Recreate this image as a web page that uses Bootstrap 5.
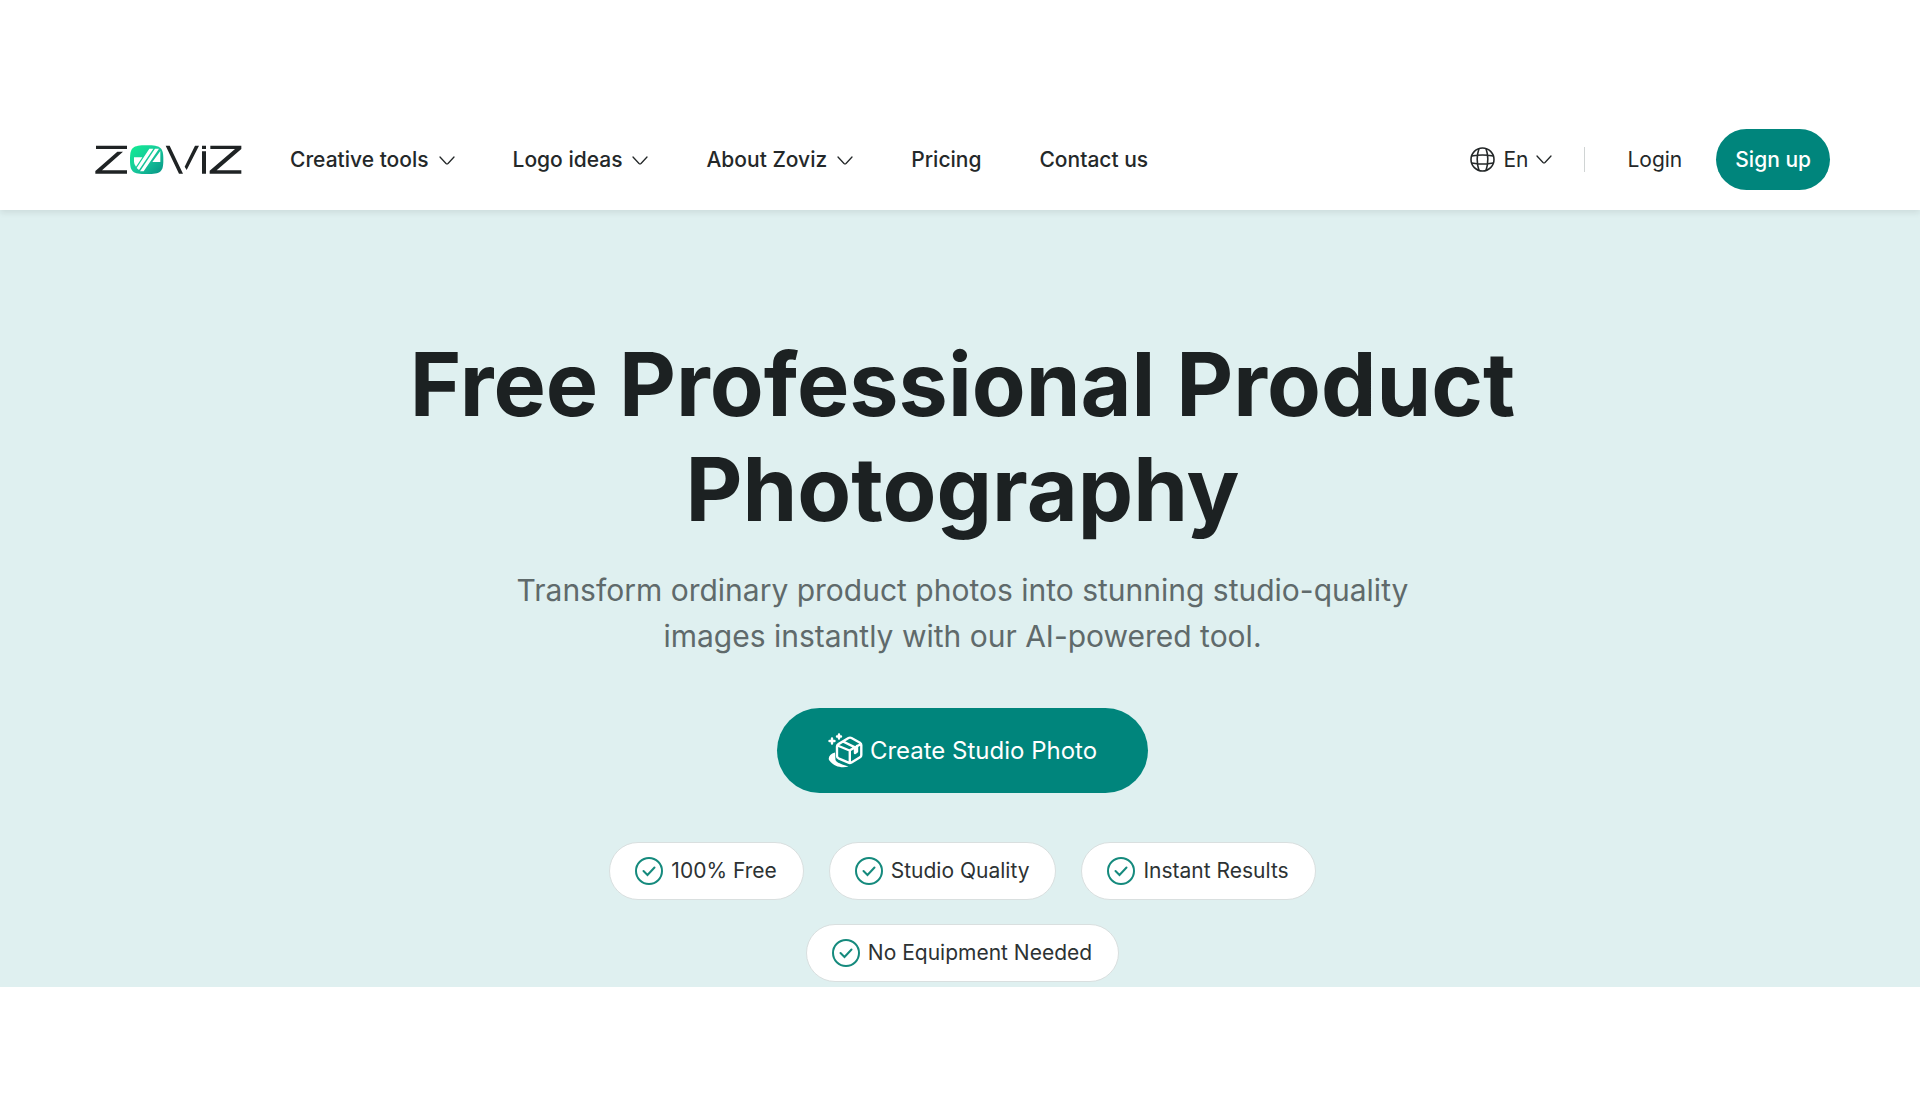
<!DOCTYPE html>
<html lang="en">
<head>
<meta charset="utf-8">
<meta name="viewport" content="width=device-width, initial-scale=1">
<title>Free Professional Product Photography</title>
<link rel="stylesheet" href="https://cdn.jsdelivr.net/npm/bootstrap@5.3.0/dist/css/bootstrap.min.css">
<style>
body{font-family:Inter,"Liberation Sans",sans-serif;color:#1c2122;background:#fff;padding-top:109px}
.site-header{padding:20px 90px 20px 95px;box-shadow:0 3px 6px rgba(0,0,0,.08);clip-path:inset(0 0 -12px 0);z-index:2;font-size:21px;line-height:31px}
.main-menu{gap:58px;margin-left:48px;font-weight:500}
.main-menu svg{margin-top:2px}
.main-menu a,.account a,.lang{color:#242829;text-decoration:none}
.with-arrow{display:inline-flex;align-items:center;gap:10px}
.lang{background:none;border:0;padding:0;gap:8px}
.rule{width:1px;height:25px;background:#d0d4d4;margin:0 42px 0 32px}
.account .signup{background:#00857c;color:#fff;border-radius:31px;padding:15px 19px;margin-left:34px;font-weight:500}
.hero{background:#dff0f0;padding:122px 24px 5px 29px}
.hero h1{font-size:88px;line-height:105px;font-weight:700;max-width:1180px;margin:0 auto 25px}
.hero p{font-size:30px;line-height:46px;color:#5f6a6b;max-width:940px;margin:0 auto 49px}
.cta{background:#00857c;color:#fff;border:0;border-radius:43px;height:85px;padding:0 51px;gap:7px;font-size:24px}
.perks{max-width:940px;margin:49px auto 0;padding:0;gap:24px 25px;list-style:none}
.perks li{display:flex;align-items:center;gap:8px;background:#fff;border:1px solid #d9dfdf;border-radius:29px;padding:0 26px 0 25px;height:58px;font-size:21px;color:#2d3233}
</style>
</head>
<body>
<header class="site-header d-flex align-items-center position-relative bg-white">
  <a href="#" aria-label="Zoviz"><svg class="d-block" width="147" height="30" viewBox="45 74 441 90">
    <defs><linearGradient id="lg" x1="0" y1="0" x2="1" y2="1"><stop offset="0" stop-color="#12ee92"/><stop offset=".5" stop-color="#17c99b"/><stop offset="1" stop-color="#079285"/></linearGradient></defs>
    <g fill="#1f2324"><path d="M48 76H141V86H48zM112 94H129L66 150H141V160H46V152z"/>
    <path d="M257 76H269L309 160H297zM345 76H357L320 149L314 139zM366 76H378V86H366zM366 93H378V160H366z"/>
    <path d="M391 76H484V86L410 150H484V160H389V151L465 86H391z"/></g>
    <path fill="url(#lg)" d="M150 118C150 82 157 75 200 75S250 82 250 118S243 161 200 161S150 154 150 118z"/>
    <path fill="#fff" d="M162 111H187L168 139Q162 132 162 124zM208 85H220L177 149L170 143zM225 85H237L191 153H180zM241 92V125H217z"/>
  </svg></a>
  <nav class="main-menu d-flex">
    <a href="#" class="with-arrow">Creative tools <svg width="16" height="10" viewBox="0 0 16 10" fill="none" stroke="#242829" stroke-width="1.3" stroke-linejoin="round" stroke-linecap="round"><path d="M1 1L7 7.500Q8 8.300 9 7.500L15 1"/></svg></a>
    <a href="#" class="with-arrow">Logo ideas <svg width="16" height="10" viewBox="0 0 16 10" fill="none" stroke="#242829" stroke-width="1.3" stroke-linejoin="round" stroke-linecap="round"><path d="M1 1L7 7.500Q8 8.300 9 7.500L15 1"/></svg></a>
    <a href="#" class="with-arrow">About Zoviz <svg width="16" height="10" viewBox="0 0 16 10" fill="none" stroke="#242829" stroke-width="1.3" stroke-linejoin="round" stroke-linecap="round"><path d="M1 1L7 7.500Q8 8.300 9 7.500L15 1"/></svg></a>
    <a href="#">Pricing</a>
    <a href="#">Contact us</a>
  </nav>
  <div class="account d-flex align-items-center ms-auto">
    <button type="button" class="lang with-arrow"><svg width="25" height="25" viewBox="0 0 25 25" fill="none" stroke="#242829" stroke-width="1.6"><circle cx="12.500" cy="12.500" r="11.500"/><path d="M9 1.600C6.500 9 6.500 16 9 23.400M16 1.600C18.500 9 18.500 16 16 23.400M1.600 9C9 7.600 16 7.600 23.400 9M1.600 16C9 17.400 16 17.400 23.400 16"/></svg>En <svg width="16" height="10" viewBox="0 0 16 10" fill="none" stroke="#242829" stroke-width="1.3" stroke-linejoin="round" stroke-linecap="round"><path d="M1 1L7 7.500Q8 8.300 9 7.500L15 1"/></svg></button>
    <span class="rule"></span>
    <a href="#">Login</a>
    <a href="#" class="signup">Sign up</a>
  </div>
</header>
<main class="hero text-center">
  <h1>Free Professional Product Photography</h1>
  <p>Transform ordinary product photos into stunning studio-quality images instantly with our AI-powered tool.</p>
  <button type="button" class="cta d-inline-flex align-items-center"><svg width="35" height="35" viewBox="0 0 35 35" fill="none" stroke="#fff" stroke-width="2.400" stroke-linejoin="round" stroke-linecap="round">
    <path fill="#fff" stroke="none" d="M7 19.500C2 21 0 24 1 27C4 32 12 36 20.500 33.500C15 32 9 30 7.500 27z"/>
    <path d="M20.500 5Q22 4.200 23.500 5L32 9.700Q33.300 10.500 33.300 12V22Q33.300 23.500 32 24.300L23.500 29.500Q22 30.400 20.500 29.700L10.500 25.300Q9 24.500 9 23V13.500Q9 12 10.500 11.100zM9.500 12.500L21.500 17.500L33 11M21.800 17.500V30M15 8.500L27 14.300V20L29 18.500V13"/>
    <path d="M4 5.500V10.500M1.500 8H6.500M11 1.500V5.500M9 3.500H13"/></svg>Create Studio Photo</button>
  <ul class="perks d-flex flex-wrap justify-content-center">
    <li><svg width="28" height="28" viewBox="0 0 28 28" fill="none" stroke="#158a7d" stroke-width="2"><circle cx="14" cy="14" r="13"/><path d="M8.500 14L12.500 18L19.500 10.500" stroke-linecap="round"/></svg>100% Free</li>
    <li><svg width="28" height="28" viewBox="0 0 28 28" fill="none" stroke="#158a7d" stroke-width="2"><circle cx="14" cy="14" r="13"/><path d="M8.500 14L12.500 18L19.500 10.500" stroke-linecap="round"/></svg>Studio Quality</li>
    <li><svg width="28" height="28" viewBox="0 0 28 28" fill="none" stroke="#158a7d" stroke-width="2"><circle cx="14" cy="14" r="13"/><path d="M8.500 14L12.500 18L19.500 10.500" stroke-linecap="round"/></svg>Instant Results</li>
    <li><svg width="28" height="28" viewBox="0 0 28 28" fill="none" stroke="#158a7d" stroke-width="2"><circle cx="14" cy="14" r="13"/><path d="M8.500 14L12.500 18L19.500 10.500" stroke-linecap="round"/></svg>No Equipment Needed</li>
  </ul>
</main>
<script src="https://cdn.jsdelivr.net/npm/bootstrap@5.3.0/dist/js/bootstrap.bundle.min.js"></script>
</body>
</html>
